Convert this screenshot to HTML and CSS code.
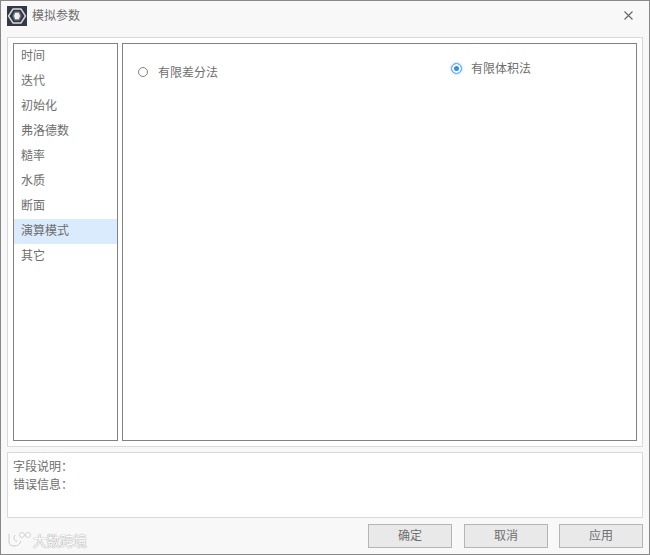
FILE: index.html
```html
<!DOCTYPE html>
<html lang="zh">
<head>
<meta charset="utf-8">
<title>模拟参数</title>
<link rel="stylesheet" href="styles.css">
</head>
<body>
<div class="window">
  <header class="titlebar">
    <span class="logo">
      <svg width="20" height="20" viewBox="0 0 20 20">
        <rect width="20" height="20" fill="#343844"/>
        <path d="M6 3h8l4.5 7-4.5 7H6l-4.500-7z" fill="none" stroke="#d9dade" stroke-width="1.4"/>
        <path d="M7.500 5.500h5l2.200 4.500-2.200 4.500h-5L5.300 10z" fill="#6f737d"/>
        <path d="M8.200 6.800h3.600l1.200 3.200-1.200 3.200H8.200L7 10z" fill="#eeeef0"/>
      </svg>
    </span>
    <span class="title">模拟参数</span>
    <svg class="close" width="9" height="9" viewBox="0 0 9 9">
      <path d="M.5.500l8 8M8.500.500l-8 8" stroke="#666" stroke-width="1.1" fill="none"/>
    </svg>
  </header>

  <main class="group">
    <ul class="nav">
      <li class="nav-item">时间</li>
      <li class="nav-item">迭代</li>
      <li class="nav-item">初始化</li>
      <li class="nav-item">弗洛德数</li>
      <li class="nav-item">糙率</li>
      <li class="nav-item">水质</li>
      <li class="nav-item">断面</li>
      <li class="nav-item selected">演算模式</li>
      <li class="nav-item">其它</li>
    </ul>
    <section class="panel">
      <label class="option option-a"><span class="radio"></span><span class="option-label">有限差分法</span></label>
      <label class="option option-b"><span class="radio checked"></span><span class="option-label">有限体积法</span></label>
    </section>
  </main>

  <section class="info">
    <div>字段说明：</div>
    <div>错误信息：</div>
  </section>

  <footer class="actions">
    <button class="btn btn-ok">确定</button>
    <button class="btn btn-cancel">取消</button>
    <button class="btn">应用</button>
  </footer>

  <div class="watermark">
    <svg width="26" height="18" viewBox="0 0 26 18">
      <path d="M3 3v8c0 3 2 4 5 4 4 0 6-2 7-5M9 4C7 7 8 10 11 10" fill="none" stroke="#fff" stroke-width="2.4"/>
      <path d="M3 3v8c0 3 2 4 5 4 4 0 6-2 7-5M9 4C7 7 8 10 11 10" fill="none" stroke="#c4c4c4" stroke-width="1"/>
      <circle cx="16" cy="4" r="2.4" fill="#fff" stroke="#c4c4c4" stroke-width=".8"/>
      <circle cx="22" cy="4" r="2.4" fill="#fff" stroke="#c4c4c4" stroke-width=".8"/>
    </svg>
    <span class="watermark-text">大数跨境</span>
  </div>
</div>
</body>
</html>
```

FILE: styles.css
```css
* { box-sizing: border-box; }

html, body {
  margin: 0;
  padding: 0;
}

body {
  width: 650px;
  height: 555px;
  overflow: hidden;
  font-family: "Noto Sans CJK SC", "Liberation Sans", sans-serif;
  font-size: 12px;
  color: #6e6e6e;
}

.window {
  position: relative;
  width: 650px;
  height: 555px;
  display: flex;
  flex-direction: column;
  background: #f8f8f8;
  border: 1px solid #888;
  padding: 0 6px;
}

.titlebar {
  height: 30px;
  margin-bottom: 6px;
  display: flex;
  align-items: center;
  gap: 5px;
}

.logo {
  display: flex;
  width: 20px;
  height: 20px;
}

.title {
  flex: 1;
  line-height: 28px;
  height: 30px;
}

.close {
  margin: 0 10px 1px 0;
}

.group {
  height: 410px;
  display: flex;
  gap: 4px;
  padding: 5px;
  background: #fff;
  border: 1px solid #d9d9d9;
}

.nav {
  width: 105px;
  margin: 0;
  padding: 0;
  list-style: none;
  background: #fff;
  border: 1px solid #828282;
}

.nav-item {
  height: 25px;
  line-height: 21px;
  padding-left: 7px;
}

.nav-item.selected {
  background: #d9ebfc;
}

.panel {
  width: 515px;
  display: flex;
  align-items: flex-start;
  padding: 15px 0 0 15px;
  border: 1px solid #828282;
}

.option {
  display: flex;
  align-items: center;
  height: 20px;
}

.option-a {
  width: 313px;
  margin-top: 3px;
  gap: 10px;
}

.option-b {
  margin-top: -1px;
  gap: 9px;
}

.option-label {
  line-height: 18px;
}

.radio {
  width: 10px;
  height: 10px;
  border: 1px solid #808080;
  border-radius: 50%;
  background: #fff;
}

.radio.checked {
  width: 11px;
  height: 11px;
  border: 1.5px solid #6db0ee;
  background: #2f8fe8;
  box-shadow: inset 0 0 0 2px #fff, 0 0 2px 1px #cfe6fb;
}

.info {
  height: 66px;
  margin-top: 5px;
  padding: 4px 5px 0;
  background: #fff;
  border: 1px solid #d9d9d9;
  line-height: 18px;
}

.actions {
  display: flex;
  justify-content: flex-end;
  margin-top: 6px;
}

.btn {
  width: 84px;
  height: 24px;
  padding: 0 0 2px;
  font: inherit;
  line-height: 20px;
  color: #6e6e6e;
  background: #e9e9e9;
  border: 1px solid #b5b5b5;
}

.btn-ok {
  margin-right: 12px;
}

.btn-cancel {
  margin-right: 11px;
}

.watermark {
  position: absolute;
  left: 5px;
  top: 530px;
  display: flex;
  align-items: center;
  gap: 1px;
}

.watermark-text {
  font-size: 13.5px;
  line-height: 18px;
  color: #fff;
  text-shadow: 0 0 1px #999, 0 0 1px #999;
}
```
